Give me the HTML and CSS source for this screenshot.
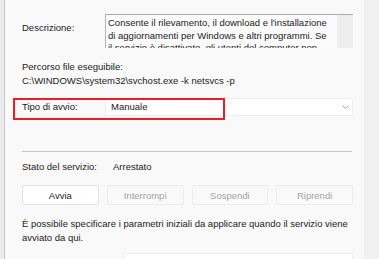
FILE: index.html
```html
<!DOCTYPE html>
<html lang="it">
<head>
<meta charset="utf-8">
<title>Proprietà servizio</title>
<link rel="stylesheet" href="styles.css">
</head>
<body>
<div class="screen">
  <div class="edge-left"></div>
  <main class="panel">
    <div class="row desc-row">
      <span class="label desc-label">Descrizione:</span>
      <div class="textbox">
        <div class="textbox-text">Consente il rilevamento, il download e l'installazione<br>di aggiornamenti per Windows e altri programmi. Se<br>il servizio è disattivato, gli utenti del computer non<br>potranno usare Windows Update.</div>
        <div class="scrollbar"></div>
      </div>
    </div>
    <div class="path-block">
      <div class="line">Percorso file eseguibile:</div>
      <div class="line">C:\WINDOWS\system32\svchost.exe -k netsvcs -p</div>
    </div>
    <div class="row startup-row">
      <span class="label">Tipo di avvio:</span>
      <div class="select">
        <span>Manuale</span>
        <svg class="chevron" width="7" height="4" viewBox="0 0 7 4"><path d="M0.5 0.5 L3.5 3.5 L6.5 0.5" fill="none" stroke="#a0a0a0" stroke-width="1"/></svg>
      </div>
      <div class="highlight"></div>
    </div>
    <div class="separator"></div>
    <div class="status-row">
      <span class="status-label">Stato del servizio:</span>
      <span>Arrestato</span>
    </div>
    <div class="buttons">
      <button class="btn">Avvia</button>
      <button class="btn" disabled>Interrompi</button>
      <button class="btn" disabled>Sospendi</button>
      <button class="btn" disabled>Riprendi</button>
    </div>
    <p class="hint">È possibile specificare i parametri iniziali da applicare quando il servizio viene avviato da qui.</p>
    <div class="params-row">
      <span class="params-label">Parametri di avvio:</span>
      <div class="input"></div>
    </div>
  </main>
  <div class="edge-right"></div>
</div>
</body>
</html>
```
FILE: styles.css
```css
* { box-sizing: border-box; }
html, body {
  margin: 0;
  padding: 0;
  background: #f9f9f9;
}
body {
  font-family: "Liberation Sans", Arial, sans-serif;
  font-size: 9.5px;
  color: #1b1b1b;
  overflow: hidden;
}
.screen {
  display: flex;
  width: 379px;
  height: 259px;
  overflow: hidden;
}
.edge-left {
  width: 5px;
  flex: none;
  background: #ececec;
  border-right: 1px solid #c9c9c9;
}
.edge-right {
  width: 15px;
  flex: none;
  background: #f1f1f1;
  border-left: 1px solid #ececec;
}
.panel {
  flex: 1;
  padding: 14px 11px 0 17px;
  line-height: 14px;
}
.row {
  display: flex;
  align-items: flex-start;
  position: relative;
}
.label {
  width: 83px;
  flex: none;
}
.desc-label {
  padding-top: 7px;
}
.textbox {
  flex: 1;
  height: 34px;
  display: flex;
  background: #fbfbfb;
  border-top: 1px solid #a9a9a9;
  border-left: 1px solid #b5b5b5;
  overflow: hidden;
}
.textbox-text {
  flex: 1;
  min-width: 0;
  padding: 2px 0 0 2px;
  line-height: 12.5px;
  white-space: nowrap;
  overflow: hidden;
}
.scrollbar {
  width: 16px;
  flex: none;
  background: #ededed;
}
.path-block {
  margin-top: 12px;
}
.startup-row {
  margin-top: 10px;
  align-items: center;
}
.select {
  flex: 1;
  height: 18px;
  display: flex;
  align-items: center;
  justify-content: space-between;
  padding: 0 3px 0 5px;
  background: #ffffff;
  border: 1px solid #eeeeee;
  border-radius: 2px;
}
.highlight {
  position: absolute;
  left: -9px;
  top: 0;
  width: 212px;
  height: 22px;
  border: 2px solid #ee1c24;
}
.separator {
  margin-top: 35px;
  height: 1px;
  background: #c4c4c4;
  margin-right: 1px;
}
.status-row {
  margin-top: 8px;
  display: flex;
}
.status-label {
  width: 91px;
}
.buttons {
  margin-top: 11px;
  display: grid;
  grid-template-columns: repeat(4, 1fr);
  gap: 8px;
}
.btn {
  height: 20px;
  font-family: inherit;
  font-size: 9.5px;
  color: #1b1b1b;
  background: #ffffff;
  border: 1px solid #e3e3e3;
  border-radius: 2px;
  padding: 0;
}
.btn:disabled {
  color: #a3a3a3;
  background: #f9f9f9;
  border-color: #ececec;
}
.hint {
  margin: 12px 0 0 0;
}
.params-row {
  margin-top: 8px;
  display: flex;
}
.params-label {
  width: 101px;
  padding-top: 4px;
}
.input {
  flex: 1;
  height: 20px;
  background: #ffffff;
  border: 1px solid #eeeeee;
}
```
